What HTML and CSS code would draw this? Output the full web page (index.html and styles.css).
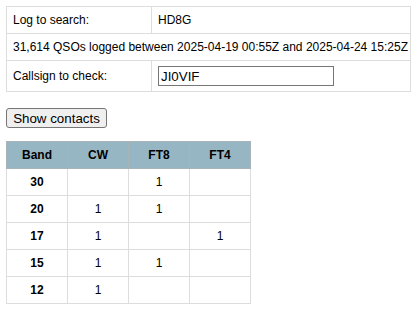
FILE: index.html
```html
<!DOCTYPE html>
<html>
<head>
  <meta charset="UTF-8">
  <title>Log check</title>
  <link rel="stylesheet" href="styles.css">
</head>
<body>

  <form class="search">
    <table class="info">
      <tr>
        <td class="info__label">Log to search:</td>
        <td>HD8G</td>
      </tr>
      <tr>
        <td colspan="2">31,614 QSOs logged between 2025-04-19 00:55Z and 2025-04-24 15:25Z</td>
      </tr>
      <tr class="info__input-row">
        <td class="info__label">Callsign to check:</td>
        <td><input type="text" class="call" value="JI0VIF"></td>
      </tr>
    </table>

    <button type="button" class="show">Show contacts</button>
  </form>

  <table class="bands">
    <tr>
      <th>Band</th>
      <th>CW</th>
      <th>FT8</th>
      <th>FT4</th>
    </tr>
    <tr><td class="band">30</td><td></td><td>1</td><td></td></tr>
    <tr><td class="band">20</td><td>1</td><td>1</td><td></td></tr>
    <tr><td class="band">17</td><td>1</td><td></td><td>1</td></tr>
    <tr><td class="band">15</td><td>1</td><td>1</td><td></td></tr>
    <tr><td class="band">12</td><td>1</td><td></td><td></td></tr>
  </table>

</body>
</html>
```

FILE: styles.css
```css
body {
  margin: 6px;
  font-family: "Liberation Sans", Arial, sans-serif;
  font-size: 12px;
  color: #000;
}

table {
  border-collapse: collapse;
}

.info {
  width: 405px;
  table-layout: fixed;
}

.info td {
  border: 1px solid #ddd;
  padding: 6px;
  line-height: 14px;
  white-space: nowrap;
}

.info .info__label {
  width: 132px;
}

.info__input-row td {
  padding-top: 5px;
  padding-bottom: 5px;
}

.call {
  display: block;
  font-family: "Liberation Sans", Arial, sans-serif;
  font-size: 13.33px;
  width: 176px;
  height: 20px;
  padding: 0 2px;
  margin: 0;
  border: 1px solid #767676;
  box-sizing: border-box;
  color: #000;
}

.show {
  display: block;
  margin: 16px 0 13px;
  padding: 0 6px;
  width: 101px;
  height: 20px;
  font-family: "Liberation Sans", Arial, sans-serif;
  font-size: 13.33px;
  background: #efefef;
  border: 1px solid #767676;
  border-radius: 3px;
  color: #000;
}

.bands th,
.bands td {
  width: 60px;
  height: 26px;
  padding: 0;
  text-align: center;
  border: 1px solid #ddd;
  line-height: 14px;
}

.bands th {
  background: #97b6c4;
  border-color: #a9b4b8;
  font-weight: bold;
}

.bands .band {
  font-weight: bold;
}
```
